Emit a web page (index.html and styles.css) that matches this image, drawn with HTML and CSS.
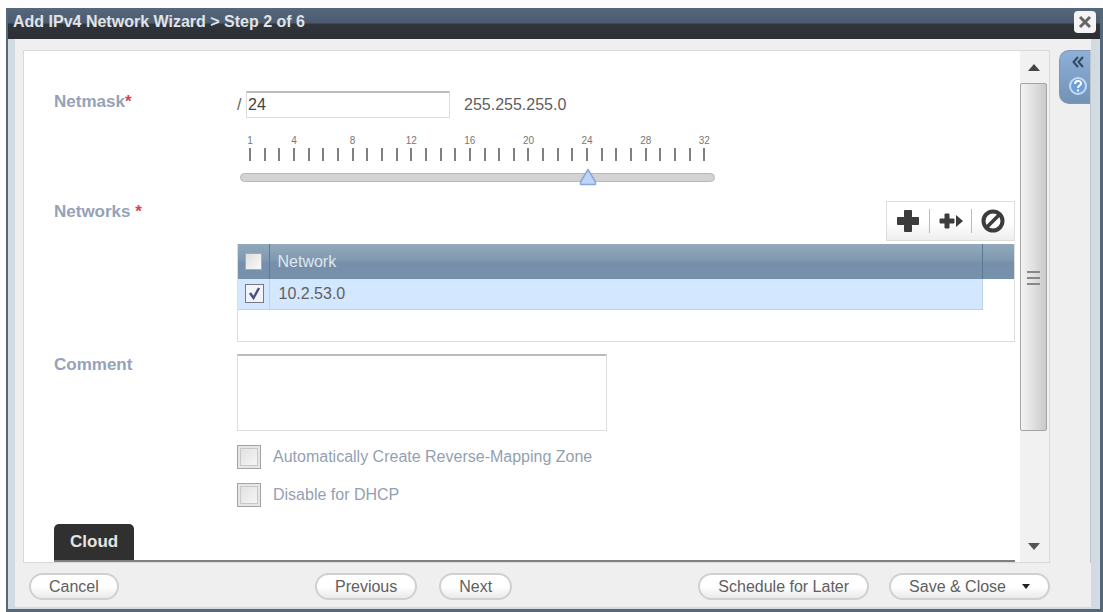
FILE: index.html
```html
<!DOCTYPE html>
<html lang="en">
<head>
    <meta charset="UTF-8">
    <meta name="viewport" content="width=device-width, initial-scale=1.0">
    <title>Add IPv4 Network Wizard</title>
    <link rel="stylesheet" href="styles.css">
</head>
<body>
    <div class="dialog">
        <header class="title-bar">
            <h1>Add IPv4 Network Wizard &gt; Step 2 of 6</h1>
            <button type="button" class="close-btn" aria-label="Close">
                <svg width="22" height="22" viewBox="0 0 22 22"><path d="M6 6l10 10M16 6L6 16" stroke="#666" stroke-width="3"/></svg>
            </button>
        </header>

        <form class="wizard">
            <div class="main">
                <div class="scroller">
                    <div class="content">
                        <div class="row">
                            <label class="row-label" for="netmask">Netmask<span class="required">*</span></label>
                            <div class="field">
                                <div class="netmask">
                                    <span class="slash">/</span>
                                    <input type="text" id="netmask" class="text-input" value="24">
                                    <output class="mask" for="netmask">255.255.255.0</output>
                                </div>
                                <div class="slider">
                                    <ol class="ticks">
                                        <li>1</li><li></li><li></li><li>4</li>
                                        <li></li><li></li><li></li><li>8</li>
                                        <li></li><li></li><li></li><li>12</li>
                                        <li></li><li></li><li></li><li>16</li>
                                        <li></li><li></li><li></li><li>20</li>
                                        <li></li><li></li><li></li><li>24</li>
                                        <li></li><li></li><li></li><li>28</li>
                                        <li></li><li></li><li></li><li>32</li>
                                    </ol>
                                    <input type="range" class="range" min="1" max="32" value="24" aria-label="Netmask bits">
                                </div>
                            </div>
                        </div>

                        <div class="row networks-row">
                            <span class="row-label">Networks <span class="required">*</span></span>
                            <div class="field">
                                <div class="toolbar">
                                    <button type="button" aria-label="Add">
                                        <svg width="24" height="24" viewBox="0 0 24 24"><path d="M8.500 1.500h7v7h7v7h-7v7h-7v-7h-7v-7h7z" fill="#3c3c3c" stroke="#3c3c3c" stroke-linejoin="round"/></svg>
                                    </button>
                                    <button type="button" aria-label="Add next available">
                                        <svg width="24" height="24" viewBox="0 0 24 24"><path d="M6 5h4v5h5v4h-5v5H6v-5H1v-4h5z" fill="#3c3c3c" stroke="#3c3c3c" stroke-linejoin="round"/><path d="M17 6l7 6-7 6z" fill="#3c3c3c"/></svg>
                                    </button>
                                    <button type="button" aria-label="Delete">
                                        <svg width="24" height="24" viewBox="0 0 24 24"><circle cx="12" cy="12" r="9.500" fill="none" stroke="#3c3c3c" stroke-width="4"/><path d="M18 6L6 18" stroke="#3c3c3c" stroke-width="3.500"/></svg>
                                    </button>
                                </div>
                                <div class="grid">
                                    <table>
                                        <thead>
                                            <tr>
                                                <th class="col-check"><input type="checkbox" class="check" aria-label="Select all"></th>
                                                <th>Network</th>
                                                <th class="col-end"></th>
                                            </tr>
                                        </thead>
                                        <tbody>
                                            <tr>
                                                <td class="col-check"><input type="checkbox" class="check" aria-label="Select 10.2.53.0" checked></td>
                                                <td>10.2.53.0</td>
                                                <td class="col-end"></td>
                                            </tr>
                                        </tbody>
                                    </table>
                                </div>
                            </div>
                        </div>

                        <div class="row comment-row">
                            <label class="row-label" for="comment">Comment</label>
                            <div class="field">
                                <textarea id="comment" class="comment"></textarea>
                                <label class="option"><input type="checkbox" class="check large">Automatically Create Reverse-Mapping Zone</label>
                                <label class="option"><input type="checkbox" class="check large">Disable for DHCP</label>
                            </div>
                        </div>

                        <div class="section-tabs">
                            <button type="button" class="section-tab">Cloud</button>
                        </div>
                    </div>

                    <div class="scrollbar" aria-hidden="true">
                        <div class="arrow"><svg width="12" height="7" viewBox="0 0 12 7"><path d="M0 7l6-7 6 7z" fill="#444"/></svg></div>
                        <div class="thumb">
                            <svg class="grip" width="13" height="16" viewBox="0 0 13 16"><path d="M0 2h13M0 8h13M0 14h13" stroke="#888" stroke-width="2"/></svg>
                        </div>
                        <div class="track"></div>
                        <div class="arrow"><svg width="12" height="7" viewBox="0 0 12 7"><path d="M0 0h12L6 7z" fill="#555"/></svg></div>
                    </div>
                </div>

                <aside class="help">
                    <button type="button" class="help-tab" aria-label="Help">
                        <svg width="12" height="12" viewBox="0 0 12 12"><path d="M6 1L1.500 6 6 11M11 1L6.500 6l4.500 5" fill="none" stroke="#33485f" stroke-width="2"/></svg>
                        <svg width="20" height="20" viewBox="0 0 20 20"><circle cx="10" cy="10" r="8" fill="#6f9fd6" stroke="#c3dbf5" stroke-width="2"/><path d="M7 8c0-4 6-4 6-.5 0 2-3 2-3 4.500M10 13.500v2" fill="none" stroke="#fff" stroke-width="2"/></svg>
                    </button>
                </aside>
            </div>

            <footer class="actions">
                <button type="button" class="btn">Cancel</button>
                <div class="steps">
                    <button type="button" class="btn">Previous</button>
                    <button type="button" class="btn">Next</button>
                </div>
                <div class="finish">
                    <button type="button" class="btn">Schedule for Later</button>
                    <button type="button" class="btn btn-menu">Save &amp; Close
                        <svg width="8" height="5" viewBox="0 0 8 5"><path d="M0 0h8L4 5z" fill="#222"/></svg>
                    </button>
                </div>
            </footer>
        </form>
    </div>
</body>
</html>
```
FILE: styles.css
```css
* {
    box-sizing: border-box;
}
body {
    margin: 0;
    padding: 8px 0 0 6px;
    height: 100vh;
    background: #fdfdfd;
    font-family: "Liberation Sans", Arial, sans-serif;
    font-size: 16px;
    color: #606060;
}
button, input, textarea {
    font: inherit;
    color: inherit;
}
button {
    padding: 0;
    border: none;
    background: none;
    cursor: pointer;
}
svg {
    display: block;
}

/* window */
.dialog {
    display: flex;
    flex-direction: column;
    height: 100%;
    border: solid #56677a;
    border-width: 0 3px 3px 2px;
    background: #d3dbe2;
}
.title-bar {
    display: flex;
    flex: none;
    align-items: center;
    justify-content: space-between;
    height: 31px;
    padding: 0 4px 4px 5px;
    background: linear-gradient(#55677c, #4c5c70 48%, #30353c 52%, #2c2e33);
}
.title-bar h1 {
    margin: 0;
    font-size: 16px;
    line-height: 20px;
    color: #e0e4e8;
}
.close-btn {
    border-radius: 4px;
    background: #f4f4f4;
}
.wizard {
    display: flex;
    flex: 1;
    flex-direction: column;
    min-height: 0;
    margin: 0 9px 2px 7px;
    background: #efefef;
}
.main {
    display: flex;
    flex: 1;
    min-height: 0;
    padding: 11px 0 0 8px;
}
.scroller {
    display: flex;
    flex: 1;
    min-width: 0;
    border: 1px solid #d9d9d9;
    background: #fff;
}
.content {
    flex: 1;
    min-width: 0;
    padding: 40px 5px 0 30px;
    overflow: hidden;
}

/* form rows */
.row {
    display: grid;
    grid-template-columns: 183px 1fr;
}
.row-label {
    font-size: 17px;
    font-weight: bold;
    line-height: 22px;
    color: #95a2b8;
}
.required {
    color: #d9434a;
}
.netmask {
    display: flex;
    align-items: center;
}
.slash {
    width: 9px;
}
.text-input {
    width: 204px;
    height: 27px;
    padding: 0 1px;
    border: 1px solid #ddd;
    border-top: 2px solid #bbb;
    color: #444;
}
.mask {
    margin-left: 14px;
}

/* netmask slider */
.slider {
    width: 475px;
    margin: 15px 0 0 3px;
}
.ticks {
    display: grid;
    grid-template-columns: repeat(32, 1fr);
    margin: 0 3px;
    padding: 0;
    list-style: none;
    font-size: 10px;
    line-height: 14px;
}
.ticks li {
    display: flex;
    flex-direction: column;
    align-items: center;
    justify-content: flex-end;
    width: 14px;
    height: 28px;
    color: #777;
}
.ticks li::after {
    content: "";
    width: 2px;
    height: 13px;
    background: #808080;
}
.range {
    display: block;
    width: 100%;
    height: 18px;
    margin: 7px 0 0;
    appearance: none;
    background: none;
}
.range::-webkit-slider-runnable-track {
    height: 9px;
    border: 1px solid #b8b8b8;
    border-radius: 5px;
    background: #d3d3d3;
}
.range::-webkit-slider-thumb {
    appearance: none;
    width: 18px;
    height: 18px;
    margin-top: -6px;
    background: url("data:image/svg+xml,%3Csvg xmlns='http://www.w3.org/2000/svg' viewBox='0 0 18 18'%3E%3Cpath d='M9 1.500L16.500 14v2.500h-15V14z' fill='%23bcd5f8' stroke='%238aa9d9' stroke-width='1.500' stroke-linejoin='round'/%3E%3C/svg%3E");
}

/* networks */
.networks-row {
    margin-top: 15px;
}
.toolbar {
    display: flex;
    align-items: center;
    width: 129px;
    height: 40px;
    margin: 0 0 3px auto;
    border: 1px solid #ddd;
    background: linear-gradient(#fff 50%, #eee);
}
.toolbar button {
    display: flex;
    flex: 1;
    justify-content: center;
}
.toolbar button + button {
    border-left: 1px solid #bbb;
}
.grid {
    height: 98px;
    border: 1px solid #ddd;
    border-top: none;
}
table {
    width: 100%;
    border-collapse: collapse;
}
th {
    height: 35px;
    padding: 0 8px;
    border-right: 1px solid #5b7896;
    background: linear-gradient(#92a9bb, #8099b0 45%, #768eab 55%, #7791ab);
    font-weight: normal;
    text-align: left;
    color: #dfe7ee;
}
td {
    height: 30px;
    padding: 0 9px;
    border: 1px solid #c0d3e6;
    border-top: none;
    background: #d3e8ff;
}
.col-check {
    width: 31px;
    padding: 0 0 0 7px;
    border-left: none;
}
.col-end {
    width: 32px;
    border-right: none;
}
td.col-end {
    border-bottom: none;
    background: #fff;
}
.check {
    display: block;
    width: 17px;
    height: 17px;
    margin: 0;
    appearance: none;
    border: 1px solid #a9a9a9;
    background: linear-gradient(135deg, #ddd, #fafafa);
}
.check:checked {
    width: 19px;
    height: 19px;
    border-color: #778;
    background: #f2f4fa url("data:image/svg+xml,%3Csvg xmlns='http://www.w3.org/2000/svg' viewBox='0 0 17 17'%3E%3Cpath d='M4 8l3.500 5L13 3' fill='none' stroke='%234a5084' stroke-width='2.500'/%3E%3C/svg%3E");
}
.check.large {
    width: 24px;
    height: 24px;
    border: 1px solid #a4a4a4;
    box-shadow: inset 0 0 0 2px #e6e6e6, inset 0 0 0 3px #c8c8c8;
}

/* comment */
.comment-row {
    margin-top: 12px;
}
.comment {
    display: block;
    width: 370px;
    height: 77px;
    border: 1px solid #ddd;
    border-top: 2px solid #bbb;
    resize: none;
}
.option {
    display: flex;
    align-items: center;
    gap: 12px;
    margin-top: 14px;
    color: #949fb2;
}
.section-tabs {
    display: flex;
    margin-top: 17px;
    border-bottom: 2px solid #808080;
}
.section-tab {
    height: 36px;
    padding: 0 16px;
    border-radius: 5px 5px 0 0;
    background: #303030;
    font-size: 17px;
    font-weight: bold;
    color: #e4e4e4;
}

/* scrollbar */
.scrollbar {
    display: flex;
    flex: none;
    flex-direction: column;
    width: 29px;
    padding-right: 2px;
    background: #f1f1f1;
}
.arrow {
    display: flex;
    align-items: center;
    justify-content: center;
    height: 32px;
}
.thumb {
    display: flex;
    flex: 7;
    align-items: center;
    justify-content: center;
    border: 1px solid #a4a4a4;
    border-radius: 2px;
    background: linear-gradient(90deg, #f3f3f3, #dedee0 55%, #c9c9cc);
}
.grip {
    margin-top: 42px;
}
.track {
    flex: 2;
}

/* help strip */
.help {
    width: 41px;
    padding-left: 9px;
    border-right: 1px solid #bcc6cc;
}
.help-tab {
    display: flex;
    flex-direction: column;
    align-items: center;
    gap: 8px;
    width: 31px;
    height: 54px;
    padding: 5px 0 0 5px;
    border: 1px solid #7f97b3;
    border-right: none;
    border-radius: 10px 0 0 10px;
    background: linear-gradient(#8eb0d8, #7292b5);
}

/* footer */
.actions {
    display: grid;
    grid-template-columns: 286px 1fr auto;
    align-items: center;
    flex: none;
    height: 44px;
    padding: 3px 41px 0 14px;
}
.steps {
    display: flex;
    gap: 22px;
}
.finish {
    display: flex;
    gap: 20px;
}
.btn {
    display: flex;
    align-items: center;
    justify-self: start;
    height: 27px;
    padding: 0 18px;
    border: 2px solid #d0d0d0;
    border-radius: 14px;
    background: linear-gradient(#fff 50%, #eaeaea);
    line-height: 20px;
    color: #606060;
}
.btn-menu {
    gap: 16px;
}
```
